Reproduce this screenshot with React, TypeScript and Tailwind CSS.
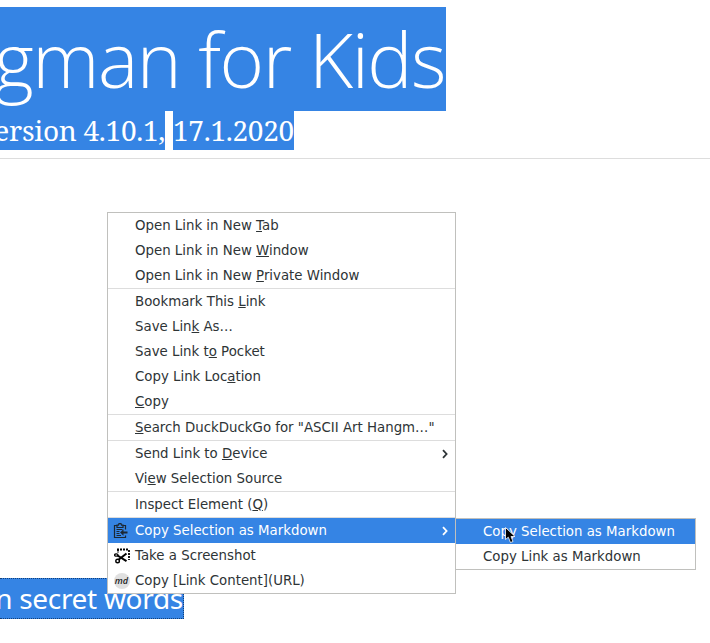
import React from "react";

type Item = { t: string; u?: number; sep?: boolean; arrow?: boolean; active?: boolean; icon?: React.ReactNode };

const items: Item[] = [
  { t: "Open Link in New Tab", u: 17 },
  { t: "Open Link in New Window", u: 17 },
  { t: "Open Link in New Private Window", u: 17 },
  { t: "Bookmark This Link", u: 14, sep: true },
  { t: "Save Link As…", u: 8 },
  { t: "Save Link to Pocket", u: 11 },
  { t: "Copy Link Location", u: 13 },
  { t: "Copy", u: 0 },
  { t: 'Search DuckDuckGo for "ASCII Art Hangm…"', u: 0, sep: true },
  { t: "Send Link to Device", u: 13, sep: true, arrow: true },
  { t: "View Selection Source", u: 2 },
  { t: "Inspect Element (Q)", u: 17, sep: true },
  { t: "Copy Selection as Markdown", sep: true, arrow: true, active: true, icon: <ClipIcon /> },
  { t: "Take a Screenshot", icon: <ShotIcon /> },
  { t: "Copy [Link Content](URL)", icon: <MdIcon /> },
];

function ClipIcon() {
  return (
    <svg width="16" height="16" viewBox="0 0 16 16" fill="none" stroke="#1c2733" strokeWidth="1.2" className="-ml-0.5">
      <path d="M4 2.5H1.5V14.5H12.5V12.5M10 2.5H12.5V6.5" />
      <path d="M4 4.5V2.2H5.5L6 .6H8L8.5 2.2H10V4.5Z" />
      <path d="M3.5 6.5H9.5M3.5 8.5H6.5M3.5 10.5H6.5M3.5 12.5H8" strokeWidth="1" />
      <path d="M14.5 9.5H9" strokeWidth="2" />
      <path d="M7 9.5L10.5 6.3V12.7Z" fill="#1c2733" stroke="none" />
    </svg>
  );
}

function ShotIcon() {
  return (
    <svg width="16" height="16" viewBox="0 0 16 16" fill="none" stroke="#000">
      <path d="M3 1.5H15" strokeWidth="2" strokeDasharray="2 1" />
      <path d="M15 2V12" strokeWidth="1.8" strokeDasharray="2 1" />
      <path d="M4 2V5" strokeWidth="1.6" strokeDasharray="1.6 1" />
      <path d="M4.5 11.8L12.5 5.5M3.5 7.5L12.5 13.2" strokeWidth="2" />
      <ellipse cx="2.3" cy="7" rx="1.7" ry="1.2" strokeWidth="1.3" />
      <circle cx="3.6" cy="13" r="1.8" strokeWidth="1.4" />
    </svg>
  );
}

function MdIcon() {
  return <span className="flex size-4 items-center justify-center rounded-full bg-[#e0e0e0] font-['Open_Sans'] text-[9px] font-semibold italic leading-none text-[#222]">md</span>;
}

function Chevron() {
  return (
    <svg width="6" height="10" viewBox="0 0 6 10" fill="none" stroke="currentColor" strokeWidth="1.8" className="mr-[7px] mt-px">
      <path d="M1 1.2L4.6 5L1 8.8" />
    </svg>
  );
}

function Label({ t, u }: Item) {
  if (u === undefined) return <>{t}</>;
  return <>{t.slice(0, u)}<span className="underline decoration-1 underline-offset-1">{t[u]}</span>{t.slice(u + 1)}</>;
}

export default function App() {
  return (
    <div className="relative h-[643px] w-[710px] overflow-hidden bg-white text-white">
      <header className="h-[159px] border-b border-[#ddd] pt-[7px]">
        <h1 className="flex h-[104px] w-[446px] justify-end bg-[#3584e4] pr-px font-['Open_Sans'] text-[76px] font-light leading-[104px] tracking-[-1.5px] whitespace-nowrap">gman for Kids</h1>
        <p className="flex h-[39px] gap-2 font-['Noto_Serif','DejaVu_Serif',serif] text-[28px] leading-[39px] tracking-[-0.3px] whitespace-nowrap">
          <span className="flex w-[165px] justify-end bg-[#3584e4]">ersion 4.10.1,</span>
          <span className="w-[121px] bg-[#3584e4]">17.1.2020</span>
        </p>
      </header>
      <p className="mt-[419px] flex h-[41px] w-[184px] justify-end border-y border-r border-dotted border-[#123f78] bg-[#3584e4] font-['Noto_Sans'] text-[28px] leading-[39px] tracking-[-0.3px] whitespace-nowrap">n secret words</p>

      <nav className="absolute left-[107px] top-[212px] w-[349px] border border-[#c0c0bd] bg-white font-['DejaVu_Sans'] text-[13.333px] text-[#2e3436]">
        {items.map((item) => (
          <div key={item.t} className={item.sep ? "border-t border-[#ddd]" : ""}>
            <div className={"flex h-[25px] items-center whitespace-nowrap " + (item.active ? "bg-[#3584e4] text-white" : "")}>
              <span className="flex w-[27px] justify-center">{item.icon}</span>
              <span className="flex-1"><Label {...item} /></span>
              {item.arrow && <Chevron />}
            </div>
          </div>
        ))}
      </nav>
      <nav className="absolute left-[455px] top-[518px] w-[241px] border border-[#c0c0bd] bg-white font-['DejaVu_Sans'] text-[13.333px] leading-[25px] text-[#2e3436]">
        <div className="bg-[#3584e4] pl-[27px] text-white">Copy Selection as Markdown</div>
        <div className="pl-[27px]">Copy Link as Markdown</div>
      </nav>
      <svg className="absolute left-[505px] top-[527px]" width="11" height="17" viewBox="0 0 11 17">
        <path d="M.5 .5V12.5L3.3 10.2L5.5 15.5L8 14.5L6 9.5H10Z" fill="#000" stroke="#fff" strokeWidth=".8" />
      </svg>
    </div>
  );
}
